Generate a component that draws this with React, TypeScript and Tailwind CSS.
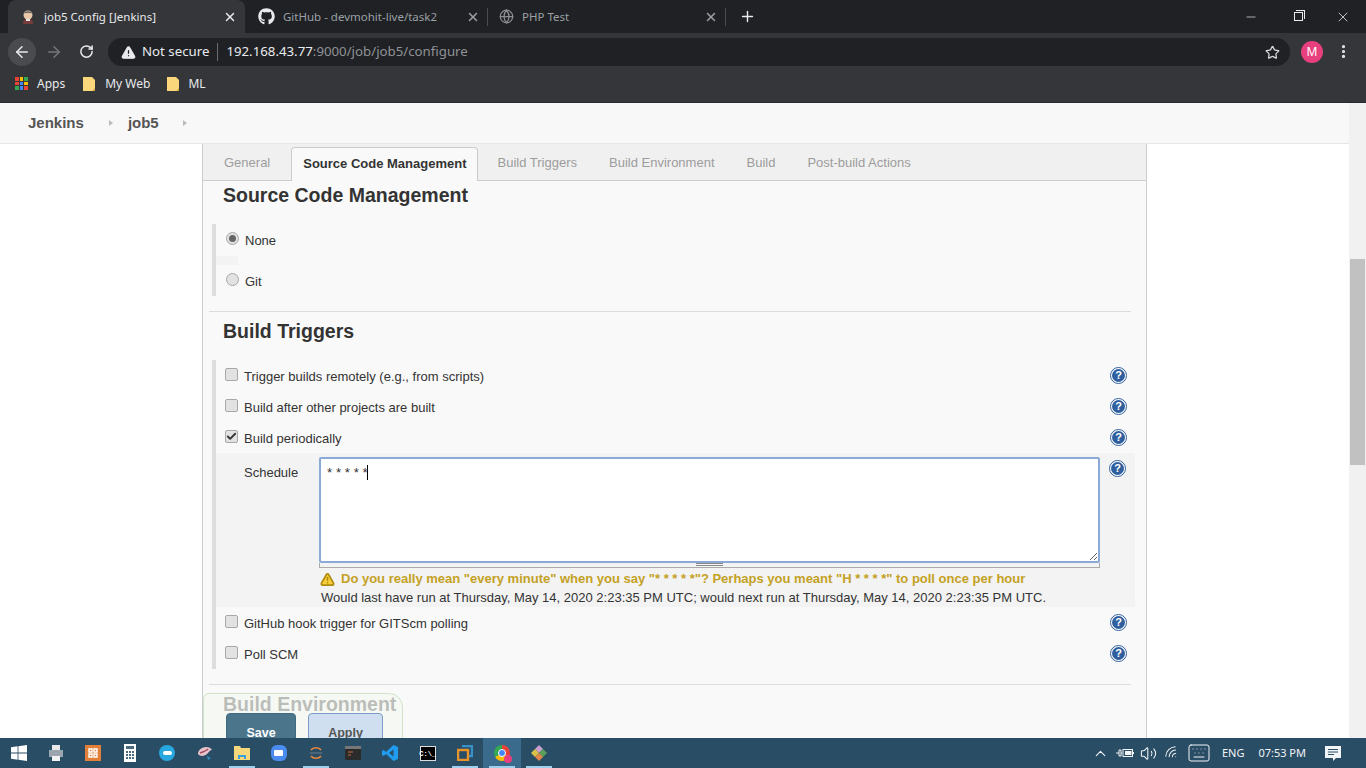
import { ArrowLeft, ArrowRight, RotateCw, Star, X, Plus, Minus, TriangleAlert, Check, ChevronUp, Volume2, Wifi, Keyboard, MoreVertical, Globe } from "lucide-react";
import { FaGithub } from "react-icons/fa";

const sans = "font-['Liberation_Sans',Arial,sans-serif]";
const ui = "font-['Noto_Sans',Roboto,sans-serif]";

function JenkinsIcon() {
  return (
    <svg width="16" height="16" viewBox="0 0 16 16">
      <circle cx="8" cy="6" r="4.5" fill="#e8c8a8" />
      <path d="M4 4.5C5 1.5 11 1.2 12 4.5 10 3.6 6 3.6 4 4.5z" fill="#5a5a5a" />
      <path d="M3 15c0-4 2-5 5-5s5 1 5 5z" fill="#7a3b3b" />
      <path d="M6 10h4v2H6z" fill="#e8e8e8" />
    </svg>
  );
}

function Tab({ title, icon, active, last }: { title: string; icon: React.ReactNode; active?: boolean; last?: boolean }) {
  return (
    <div className={`relative flex h-[33px] items-center pr-2 ${active ? "w-[237px] rounded-t-lg bg-[#35363a] pl-3 text-[#e8eaed]" : last ? "w-[238px] pl-[11px] text-[#9aa0a6]" : "w-[243px] pl-[13px] text-[#9aa0a6]"}`}>
      <span className={`flex shrink-0 items-center ${active ? "w-6" : last ? "w-[23px]" : "w-[25px]"}`}>{icon}</span>
      <span className={`flex-1 truncate text-[11.5px] ${ui}`}>{title}</span>
      <X size={14} strokeWidth={2.5} className={active ? "text-[#e8eaed]" : "text-[#9aa0a6]"} />
      {!active && <span className="absolute right-0 top-2 h-[18px] w-px bg-[#4a4c50]" />}
    </div>
  );
}

function Folder() {
  return (
    <svg width="14" height="16" viewBox="0 0 14 16">
      <path d="M1 1h9l3 3v11H1z" fill="#fbd67a" />
      <path d="M10 15l3-3v3z" fill="#d9a93f" />
    </svg>
  );
}

function AppsIcon() {
  const colors = ["#ea4335", "#fbbc05", "#34a853", "#ea4335", "#4285f4", "#fbbc05", "#34a853", "#4285f4", "#ea4335"];
  return (
    <div className="grid h-[13px] w-[13px] grid-cols-3 gap-px">
      {colors.map((c, i) => (
        <span key={i} style={{ background: c }} />
      ))}
    </div>
  );
}

function HelpIcon() {
  return (
    <span className={`flex h-[17px] w-[17px] items-center justify-center rounded-full border-[1.5px] border-[#2f5f9e] bg-white p-px ${sans}`}>
      <span className="flex h-full w-full items-center justify-center rounded-full bg-[#2f5f9e] text-[11px] font-bold leading-none text-white">?</span>
    </span>
  );
}

function CheckBox({ checked }: { checked?: boolean }) {
  return (
    <span className="flex h-[13px] w-[13px] shrink-0 items-center justify-center rounded-[2px] border border-[#a8a8a8] bg-[#e2e2e2]">
      {checked && <Check size={11} strokeWidth={4} className="text-[#333]" />}
    </span>
  );
}

function Radio({ checked }: { checked?: boolean }) {
  return (
    <span className="flex h-[13px] w-[13px] shrink-0 items-center justify-center rounded-full border border-[#a8a8a8] bg-[#e2e2e2]">
      {checked && <span className="h-[7px] w-[7px] rounded-full bg-[#666]" />}
    </span>
  );
}

function TriggerRow({ label, checked }: { label: string; checked?: boolean }) {
  return (
    <div className="flex h-[31px] items-center pl-[9px] pr-[8px] pt-[2px]">
      <span className="-mt-[4px]"><CheckBox checked={checked} /></span>
      <span className="ml-[6px] flex-1 text-[13px] text-[#333]">{label}</span>
      <span className="-mt-[2px]"><HelpIcon /></span>
    </div>
  );
}

function Schedule() {
  return (
    <div className="flex h-[154px] bg-[#f3f3f3] pr-[8px] pt-[4px]">
      <div className="w-[103px] pl-[28px] pt-[6px] text-[13px] text-[#333]">Schedule</div>
      <div className="w-[781px]">
        <div className="relative">
          <textarea
            readOnly
            defaultValue="* * * * *"
            className={`block h-[106px] w-full resize-y rounded-[2px] border-2 border-[#8aaad8] bg-white px-[6px] py-[4px] text-[13.33px] text-[#333] outline-none ${sans}`}
          />
          <span className="absolute left-[48px] top-[8px] h-[15px] w-px bg-black" />
        </div>
        <div className="flex h-[5px] justify-center border border-t-0 border-[#aaa]">
          <span className="h-[3px] w-[27px] border-y border-[#8a8a8a]" />
        </div>
        <div className="ml-px mt-[3px] flex h-[16px] items-center whitespace-nowrap text-[13px] font-bold text-[#c4a124]">
          <TriangleAlert size={15} strokeWidth={2.5} fill="#f6cf3a" className="mr-[6px] text-[#b08a10]" />
          Do you really mean "every minute" when you say "* * * * *"? Perhaps you meant "H * * * *" to poll once per hour
        </div>
        <div className="ml-[2px] mt-px whitespace-nowrap text-[13px] text-[#333]">
          Would last have run at Thursday, May 14, 2020 2:23:35 PM UTC; would next run at Thursday, May 14, 2020 2:23:35 PM UTC.
        </div>
      </div>
      <div className="ml-[9px] mt-[3px]"><HelpIcon /></div>
    </div>
  );
}

function ConfigTab({ label, active }: { label: string; active?: boolean }) {
  return (
    <div className={`flex items-center text-[13px] ${active ? "relative z-10 ml-[5px] mr-[4px] mt-[3px] h-[34px] rounded-t-[4px] border border-b-0 border-[#ccc] bg-[#f9f9f9] pb-[2px] pl-[11px] pr-[10px] font-bold text-[#333]" : "h-[36px] px-4 pt-[2px] text-[#9c9c9c]"}`}>
      {label}
    </div>
  );
}

function Taskbar() {
  const icons: { node: React.ReactNode; on?: boolean; hi?: boolean }[] = [
    { node: (
      <svg width="18" height="18" viewBox="0 0 18 18" fill="#fff">
        <path d="M1 3.2l6.6-.9v6.3H1zM8.4 2.2L17 1v7.6H8.4zM1 9.4h6.6v6.3L1 14.8zM8.4 9.4H17V17l-8.6-1.2z" />
      </svg>
    ) },
    { node: (
      <svg width="16" height="18" viewBox="0 0 16 18">
        <rect x="4" y="1" width="8" height="5" fill="#e8e8e8" />
        <rect x="1" y="6" width="14" height="7" fill="#9aa5ad" />
        <rect x="4" y="12" width="8" height="5" fill="#f2f2f2" />
      </svg>
    ) },
    { node: (
      <svg width="16" height="16" viewBox="0 0 16 16">
        <rect width="16" height="16" fill="#e2803a" />
        <path d="M4 4h3v3H4zM9 4h3v3H9zM4 9h3v3H4zM9 9h3v3H9z" fill="none" stroke="#fff" strokeWidth="1.4" />
      </svg>
    ) },
    { node: (
      <svg width="12" height="18" viewBox="0 0 12 18">
        <rect width="12" height="18" fill="#fff" />
        <rect x="2" y="2" width="8" height="3" fill="#4a6a80" />
        <path d="M2 7h2v2H2zM5 7h2v2H5zM8 7h2v2H8zM2 10h2v2H2zM5 10h2v2H5zM8 10h2v2H8zM2 13h2v2H2zM5 13h2v2H5zM8 13h2v2H8z" fill="#4a6a80" />
      </svg>
    ) },
    { node: (
      <span className="flex h-4 w-4 items-center justify-center rounded-full bg-[#28a8e0]">
        <span className="h-[4px] w-[9px] rounded-sm bg-white" />
      </span>
    ) },
    { node: (
      <svg width="18" height="16" viewBox="0 0 18 16">
        <path d="M2 9c0-4 4-7 8-7 3 0 5 1 6 3-2 0-3 2-5 4-2 2-7 3-9 0z" fill="#e7c3cb" />
        <path d="M4 8c3-1 6-2 8-4" stroke="#a8495f" strokeWidth="1.5" fill="none" />
        <path d="M11 11l4 2-3 2z" fill="#2f8fc0" />
      </svg>
    ) },
    { on: true, node: (
      <svg width="16" height="16" viewBox="0 0 16 16">
        <path d="M0 1h6l1 2h9v12H0z" fill="#f6d77a" />
        <path d="M4 14v-4h8v4h-2v-2H6v2z" fill="#3aa0dc" />
      </svg>
    ) },
    { node: (
      <span className="flex h-4 w-4 items-center justify-center rounded-[6px] bg-[#4a8cf0]">
        <span className="h-[6px] w-[9px] rounded-[1px] bg-white" />
      </span>
    ) },
    { on: true, node: (
      <svg width="16" height="18" viewBox="0 0 16 18" fill="none" strokeWidth="1.6">
        <path d="M3 6c2-3 8-3 10 0" stroke="#e8863a" />
        <path d="M3 12c2 3 8 3 10 0" stroke="#e8863a" />
        <path d="M2 9h12" stroke="#6b7f8c" strokeWidth="1" />
      </svg>
    ) },
    { node: (
      <svg width="16" height="14" viewBox="0 0 16 14">
        <rect width="16" height="14" rx="1" fill="#2b2b2b" />
        <rect width="16" height="3" fill="#777" />
        <path d="M3 6h5M3 9h3" stroke="#c96b3b" />
      </svg>
    ) },
    { node: (
      <svg width="16" height="16" viewBox="0 0 16 16">
        <path d="M11.5 0L16 2v12l-4.5 2L4 9l-2.5 2L0 10V6l1.5-1L4 7z" fill="#1f9cf0" />
        <path d="M11.5 4.5v7L7 8z" fill="#2a4d66" />
      </svg>
    ) },
    { node: (
      <span className="flex h-[15px] w-[16px] items-end justify-center border border-[#ddd] bg-black pb-[2px] font-['Liberation_Mono',monospace] text-[7px] font-bold leading-none text-white">C:\_</span>
    ) },
    { on: true, node: (
      <svg width="16" height="16" viewBox="0 0 16 16" fill="none" strokeWidth="2.4">
        <path d="M5 1h10v10H12" stroke="#3a90c8" />
        <rect x="1" y="5" width="10" height="10" stroke="#e8942a" />
      </svg>
    ) },
    { on: true, hi: true, node: (
      <span className="relative h-4 w-4 rounded-full bg-[conic-gradient(#ea4335_0_33%,#fbbc05_33%_66%,#34a853_66%)]">
        <span className="absolute left-[4px] top-[4px] h-2 w-2 rounded-full border border-white bg-[#4285f4]" />
        <span className="absolute -bottom-[2px] -right-[2px] h-[8px] w-[8px] rounded-full bg-[#e8407f]" />
      </span>
    ) },
    { on: true, node: (
      <svg width="16" height="16" viewBox="0 0 16 16">
        <path d="M8 0l4 4-4 4-4-4z" fill="#c9a0d0" />
        <path d="M4 4l4 4-4 4-4-4z" fill="#d9c24a" />
        <path d="M12 4l4 4-4 4-4-4z" fill="#5aa05a" />
        <path d="M8 8l4 4-4 4-4-4z" fill="#e0884a" />
      </svg>
    ) },
  ];
  return (
    <div className="flex h-[30px] items-center bg-[#2a4d66] text-[#f2f5f7]">
      {icons.map((item, i) => (
        <div key={i} className={`relative flex h-full w-[37.2px] items-center justify-center ${item.hi ? "bg-[#3a6a8c]" : ""}`}>
          {item.node}
          {item.on && <span className="absolute inset-x-0 bottom-0 mx-auto h-[2px] w-[26px] bg-[#9ed0ee]" />}
        </div>
      ))}
      <div className={`ml-auto flex h-full items-center text-[11px] ${ui}`}>
        <ChevronUp size={17} strokeWidth={1.5} className="mr-[7px]" />
        <svg width="18" height="12" viewBox="0 0 18 12" className="mr-[6px]" fill="none" stroke="#f2f5f7">
          <path d="M0 6h3M3 3v6h2V3zM5 6h1" />
          <rect x="7" y="2.5" width="9.5" height="7" />
          <rect x="9" y="4" width="6.5" height="4" fill="#f2f5f7" stroke="none" />
          <path d="M17.5 5v2" />
        </svg>
        <Volume2 size={17} strokeWidth={1.5} className="mr-[7px]" />
        <Wifi size={16} strokeWidth={1.5} className="mr-[7px] -rotate-45" />
        <Keyboard size={24} strokeWidth={1} className="mr-[11px]" />
        <span className="mr-[14px]">ENG</span>
        <span className="mr-[18px]">07:53 PM</span>
        <svg width="18" height="18" viewBox="0 0 18 18" className="mr-[24px]">
          <path d="M1 2h16v12h-5l-3 3v-3H1z" fill="#f2f5f7" />
          <path d="M4 5.5h10M4 8h10M4 10.5h6" stroke="#2a4d66" />
        </svg>
      </div>
    </div>
  );
}

export default function App() {
  return (
    <div className={`flex h-[768px] w-[1366px] flex-col overflow-hidden bg-white ${sans}`}>
      {/* tab strip */}
      <div className="flex h-[33px] items-center bg-[#202124] pl-2">
        <Tab active title="job5 Config [Jenkins]" icon={<JenkinsIcon />} />
        <Tab title="GitHub - devmohit-live/task2" icon={<FaGithub size={17} className="text-[#e8eaed]" />} />
        <Tab last title="PHP Test" icon={<Globe size={15} className="text-[#8a8d91]" />} />
        <Plus size={17} strokeWidth={2} className="ml-[13px] text-[#e8eaed]" />
        <div className="ml-auto flex items-center text-[#e8eaed]">
          <Minus size={14} strokeWidth={1.2} className="mr-[36px]" />
          <span className="relative mr-[32px] h-[9px] w-[9px] border border-[#e8eaed] after:absolute after:-right-[3px] after:-top-[3px] after:h-[9px] after:w-[9px] after:border-r after:border-t after:border-[#e8eaed]" />
          <X size={16} strokeWidth={1.2} className="mr-[15px]" />
        </div>
      </div>

      {/* toolbar */}
      <div className="flex h-[37px] items-center bg-[#35363a] pl-[8px] text-[#e8eaed]">
        <span className="flex h-7 w-7 items-center justify-center rounded-full bg-[#4a4b4f]">
          <ArrowLeft size={18} strokeWidth={2} />
        </span>
        <ArrowRight size={18} strokeWidth={2} className="ml-[9px] text-[#75777a]" />
        <RotateCw size={15} strokeWidth={2.4} className="ml-[16px]" />
        <div className={`ml-[14px] flex h-7 w-[1182px] items-center rounded-full bg-[#202124] pl-[13px] pr-[10px] pt-px text-[13.25px] ${ui}`}>
          <TriangleAlert size={15} fill="#e8eaed" stroke="#e8eaed" className="mr-[6px] [&>path:nth-child(n+2)]:stroke-[#202124]" />
          <span>Not secure</span>
          <span className="mx-[8px] h-[18px] w-px bg-[#6a6c70]" />
          <span>192.168.43.77</span>
          <span className="text-[#8f9296]">:9000/job/job5/configure</span>
          <Star size={15} strokeWidth={2} className="ml-auto text-[#d8dadd]" />
        </div>
        <span className={`ml-[11px] flex h-[22px] w-[22px] items-center justify-center rounded-full bg-[#e8407f] text-[12px] text-white ${ui}`}>M</span>
        <MoreVertical size={17} strokeWidth={2.5} className="ml-[12px]" />
      </div>

      {/* bookmarks */}
      <div className={`flex h-[33px] items-center border-b border-[#2a2a2c] bg-[#35363a] pb-[5px] pl-[15px] text-[12px] text-[#e8eaed] ${ui}`}>
        <AppsIcon />
        <span className="ml-[9px]">Apps</span>
        <span className="ml-[17px]"><Folder /></span>
        <span className="ml-[9px]">My Web</span>
        <span className="ml-[16px]"><Folder /></span>
        <span className="ml-[8px]">ML</span>
      </div>

      {/* page + scrollbar */}
      <div className="flex min-h-0 flex-1">
        <div className="relative min-w-0 flex-1 overflow-hidden">
          <div className="flex h-[41px] items-center border-b border-[#e6e6e6] bg-[#f8f8f8] pl-[28px] text-[#555]">
            <span className="text-[15px] font-bold">Jenkins</span>
            <span className="ml-[25px] mr-[15px] h-0 w-0 border-y-[3px] border-l-[4px] border-y-transparent border-l-[#bbb]" />
            <span className="text-[15px] font-bold">job5</span>
            <span className="ml-[24px] h-0 w-0 border-y-[3px] border-l-[4px] border-y-transparent border-l-[#bbb]" />
          </div>

          <div className="ml-[202px] h-full w-[945px] border-x border-[#ccc] bg-[#f9f9f9]">
            <div className="flex h-[37px] border-b border-[#ccc] bg-[#f0f0f0] pl-[5px]">
              <ConfigTab label="General" />
              <ConfigTab active label="Source Code Management" />
              <ConfigTab label="Build Triggers" />
              <ConfigTab label="Build Environment" />
              <ConfigTab label="Build" />
              <ConfigTab label="Post-build Actions" />
            </div>

            <h2 className="mt-[1px] pl-5 text-[19.5px] font-bold leading-[26px] text-[#333]">Source Code Management</h2>
            <div className="ml-[9px] mt-[16px] h-[72px] w-[920px] border-l-4 border-[#ddd] text-[13px] text-[#333]">
              <div className="flex h-[32px] items-center pl-[10px] pt-[2px]">
                <span className="-mt-[5px]"><Radio checked /></span>
                <span className="ml-[6px]">None</span>
              </div>
              <div className="h-[9px] w-[22px] bg-[#f3f3f3]" />
              <div className="flex h-[31px] items-center pl-[10px] pt-[2px]">
                <span className="-mt-[5px]"><Radio /></span>
                <span className="ml-[6px]">Git</span>
              </div>
            </div>

            <div className="ml-[6px] mt-[15px] h-px w-[922px] bg-[#dcdcdc]" />
            <h2 className="mt-[6px] pl-5 text-[19.5px] font-bold leading-[26px] text-[#333]">Build Triggers</h2>
            <div className="ml-[9px] mt-[16px] w-[923px] border-l-4 border-[#ddd]">
              <TriggerRow label="Trigger builds remotely (e.g., from scripts)" />
              <TriggerRow label="Build after other projects are built" />
              <TriggerRow checked label="Build periodically" />
              <Schedule />
              <TriggerRow label="GitHub hook trigger for GITScm polling" />
              <TriggerRow label="Poll SCM" />
            </div>
            <div className="ml-[6px] mt-[15px] h-px w-[922px] bg-[#dcdcdc]" />
            <h2 className="mt-[6px] pl-5 text-[19.5px] font-bold leading-[26px] text-[#333]">Build Environment</h2>
          </div>

          {/* sticky save bar lies over the page */}
          <div className="absolute left-[203px] top-[590px] flex h-[60px] w-[200px] gap-3 rounded-tl-[6px] rounded-tr-[14px] border border-[#cfe3c8] bg-[#f5f8f2]/70 pl-[22px] pt-[19px]">
            <span className="flex h-[36px] w-[70px] justify-center rounded-t-[4px] border border-[#3f6a80] bg-[#4b758b] pt-[10px] text-[12.5px] font-bold text-white">Save</span>
            <span className="flex h-[36px] w-[75px] justify-center rounded-t-[4px] border border-[#7b9cc9] bg-[#d0dff0] pt-[10px] text-[12.5px] font-bold text-[#555]">Apply</span>
          </div>
        </div>

        {/* scrollbar */}
        <div className="w-[17px] bg-[#f1f1f1] pt-[156px]">
          <div className="mx-auto h-[206px] w-[15px] bg-[#c1c1c1]" />
        </div>
      </div>

      <Taskbar />
    </div>
  );
}
